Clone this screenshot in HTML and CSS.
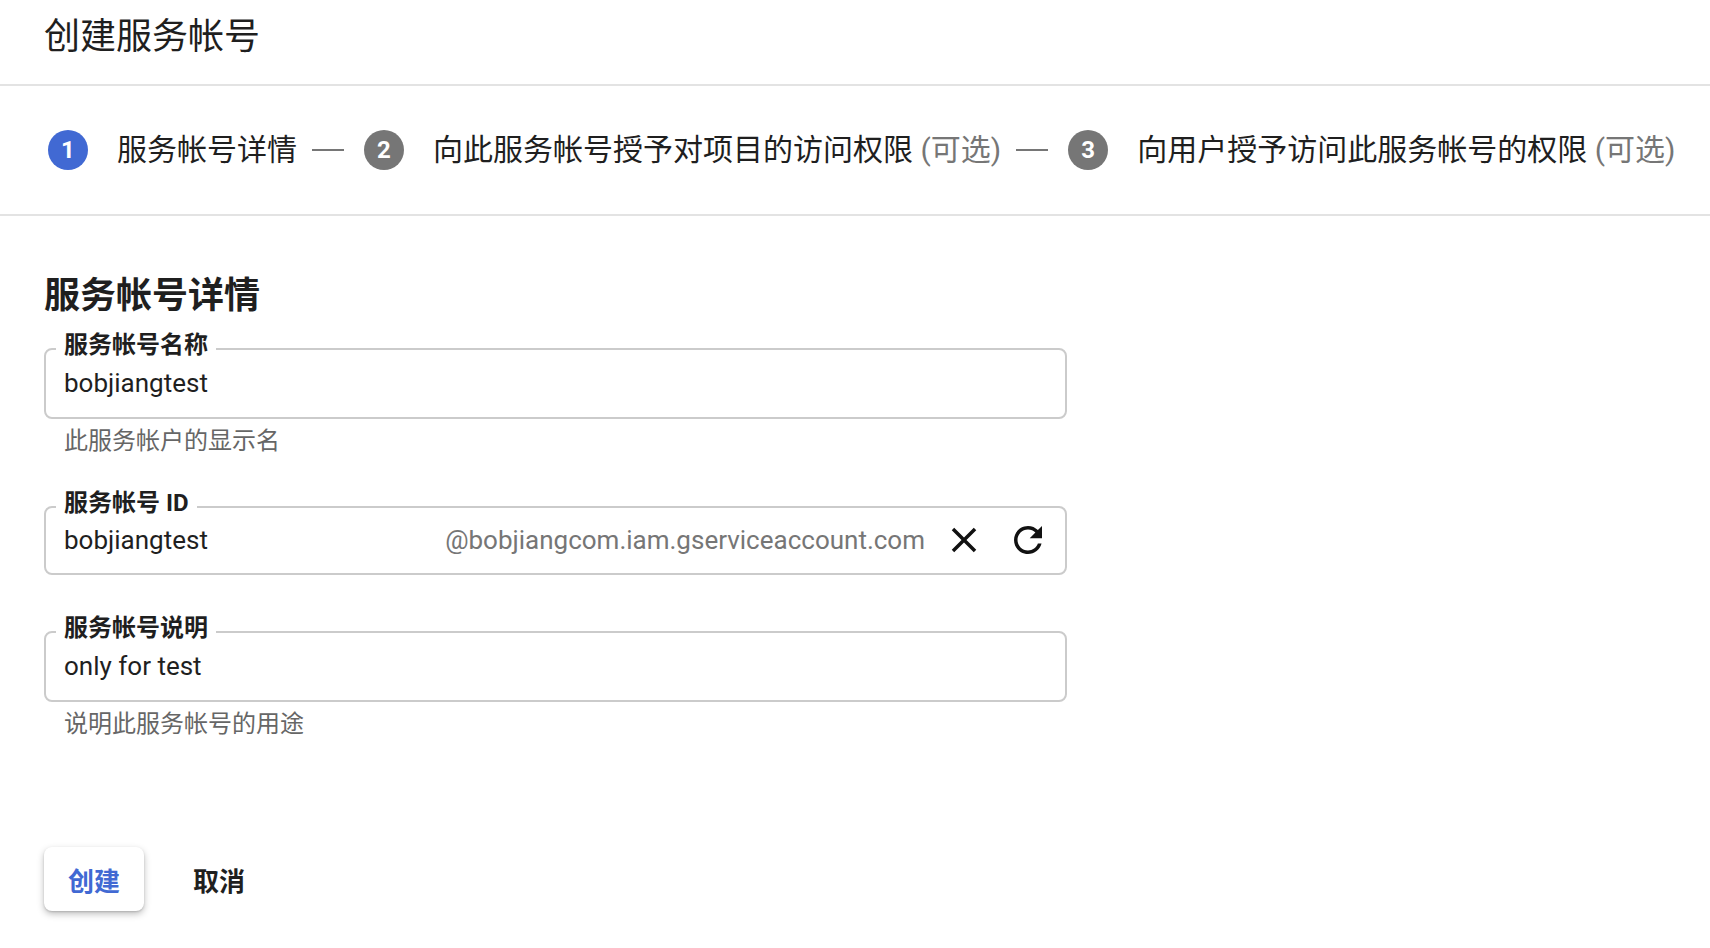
FILE: index.html
```html
<!DOCTYPE html>
<html lang="zh-CN">
<head>
<meta charset="utf-8">
<title>创建服务帐号</title>
<link rel="stylesheet" href="styles.css">
</head>
<body>
  <header class="header">
    <h1 class="title">创建服务帐号</h1>
  </header>

  <nav class="stepper">
    <span class="step-num active">1</span>
    <span class="step-text">服务帐号详情</span>
    <span class="step-dash"></span>
    <span class="step-num">2</span>
    <span class="step-text">向此服务帐号授予对项目的访问权限 <span class="optional">(可选)</span></span>
    <span class="step-dash"></span>
    <span class="step-num">3</span>
    <span class="step-text">向用户授予访问此服务帐号的权限 <span class="optional">(可选)</span></span>
  </nav>

  <main class="section">
    <h2 class="section-title">服务帐号详情</h2>

    <div class="group">
      <fieldset class="field">
        <legend class="field-label">服务帐号名称</legend>
        <div class="field-row">
          <span class="value">bobjiangtest</span>
        </div>
      </fieldset>
      <div class="helper">此服务帐户的显示名</div>
    </div>

    <div class="group group-nohelp">
      <fieldset class="field">
        <legend class="field-label">服务帐号 ID</legend>
        <div class="field-row field-row-id">
          <span class="value value-grow">bobjiangtest</span>
          <span class="suffix">@bobjiangcom.iam.gserviceaccount.com</span>
          <span class="icon-btn icon-close">
            <svg viewBox="0 0 24 24" width="42" height="42"><path d="M19 6.41L17.59 5 12 10.59 6.41 5 5 6.41 10.59 12 5 17.59 6.41 19 12 13.41 17.59 19 19 17.59 13.41 12z"/></svg>
          </span>
          <span class="icon-btn icon-refresh">
            <svg viewBox="0 0 24 24" width="42" height="42"><path d="M17.65 6.35C16.2 4.9 14.21 4 12 4c-4.42 0-7.99 3.58-7.99 8s3.57 8 7.99 8c3.73 0 6.84-2.55 7.73-6h-2.08c-.82 2.33-3.04 4-5.65 4-3.31 0-6-2.69-6-6s2.69-6 6-6c1.66 0 3.14.69 4.22 1.78L13 11h7V4l-2.35 2.35z"/></svg>
          </span>
        </div>
      </fieldset>
    </div>

    <div class="group">
      <fieldset class="field">
        <legend class="field-label">服务帐号说明</legend>
        <div class="field-row">
          <span class="value">only for test</span>
        </div>
      </fieldset>
      <div class="helper">说明此服务帐号的用途</div>
    </div>

    <div class="actions">
      <button class="btn btn-primary" type="button">创建</button>
      <button class="btn btn-text" type="button">取消</button>
    </div>
  </main>
</body>
</html>
```

FILE: styles.css
```css
* {
  box-sizing: border-box;
}

body {
  margin: 0;
  background: #ffffff;
  color: #1f1f1f;
  font-family: Roboto, "Noto Sans CJK SC", "Noto Sans", sans-serif;
}

.header {
  padding: 15px 44px 0;
  height: 86px;
  border-bottom: 2px solid #e3e3e3;
}

.title {
  margin: 0;
  font-size: 36px;
  line-height: 44px;
  font-weight: 400;
}

.stepper {
  display: flex;
  align-items: center;
  height: 130px;
  padding: 0 48px;
  border-bottom: 2px solid #e3e3e3;
  font-size: 30px;
  line-height: 40px;
}

.step-num {
  flex: none;
  width: 40px;
  height: 40px;
  border-radius: 50%;
  background: #767676;
  color: #ffffff;
  font-size: 24px;
  font-weight: 700;
  line-height: 40px;
  text-align: center;
  margin-right: 29px;
}

.step-num.active {
  background: #4169d3;
}

.step-text {
  white-space: nowrap;
}

.optional {
  color: #767676;
}

.step-dash {
  flex: none;
  width: 32px;
  height: 2px;
  background: #767676;
  margin: 0 20px 0 15px;
}

.section {
  padding: 58px 44px 24px;
}

.section-title {
  margin: 0 0 13px;
  font-size: 36px;
  line-height: 44px;
  font-weight: 700;
}

.group {
  margin-bottom: 34px;
}

.group-nohelp {
  margin-bottom: 39px;
}

.field {
  width: 1023px;
  margin: 0;
  min-width: 0;
  padding: 0 16px 18px 10px;
  border: 2px solid #cbcbcb;
  border-radius: 8px;
}

.field-label {
  padding: 0 8px 8px;
  font-size: 24px;
  line-height: 28px;
  font-weight: 700;
  color: #1f1f1f;
}

.field-row {
  display: flex;
  align-items: center;
  height: 32px;
  padding-left: 8px;
}

.field-row-id {
  height: 30px;
}

.value {
  font-size: 26px;
  line-height: 32px;
  white-space: nowrap;
}

.value-grow {
  flex: 1;
}

.suffix {
  font-size: 26px;
  line-height: 32px;
  color: #767676;
  white-space: nowrap;
  margin-right: 18px;
}

.icon-btn {
  flex: none;
  display: flex;
  width: 42px;
  height: 42px;
}

.icon-btn svg {
  fill: #111111;
}

.icon-close {
  margin-right: 22px;
}

.helper {
  margin-top: 8px;
  padding-left: 20px;
  font-size: 24px;
  line-height: 28px;
  color: #666666;
}

.actions {
  display: flex;
  align-items: center;
  margin-top: 109px;
}

.btn {
  height: 64px;
  padding: 0 24px;
  border: none;
  border-radius: 8px;
  background: transparent;
  font-family: Roboto, "Noto Sans CJK SC", "Noto Sans", sans-serif;
  font-size: 26px;
  font-weight: 700;
  color: #1f1f1f;
  cursor: pointer;
}

.btn-primary {
  width: 100px;
  background: #ffffff;
  color: #4169d3;
  box-shadow: 0 3px 7px rgba(0, 0, 0, 0.26), 0 1px 2px rgba(0, 0, 0, 0.14);
}

.btn-text {
  margin-left: 25px;
}
```
